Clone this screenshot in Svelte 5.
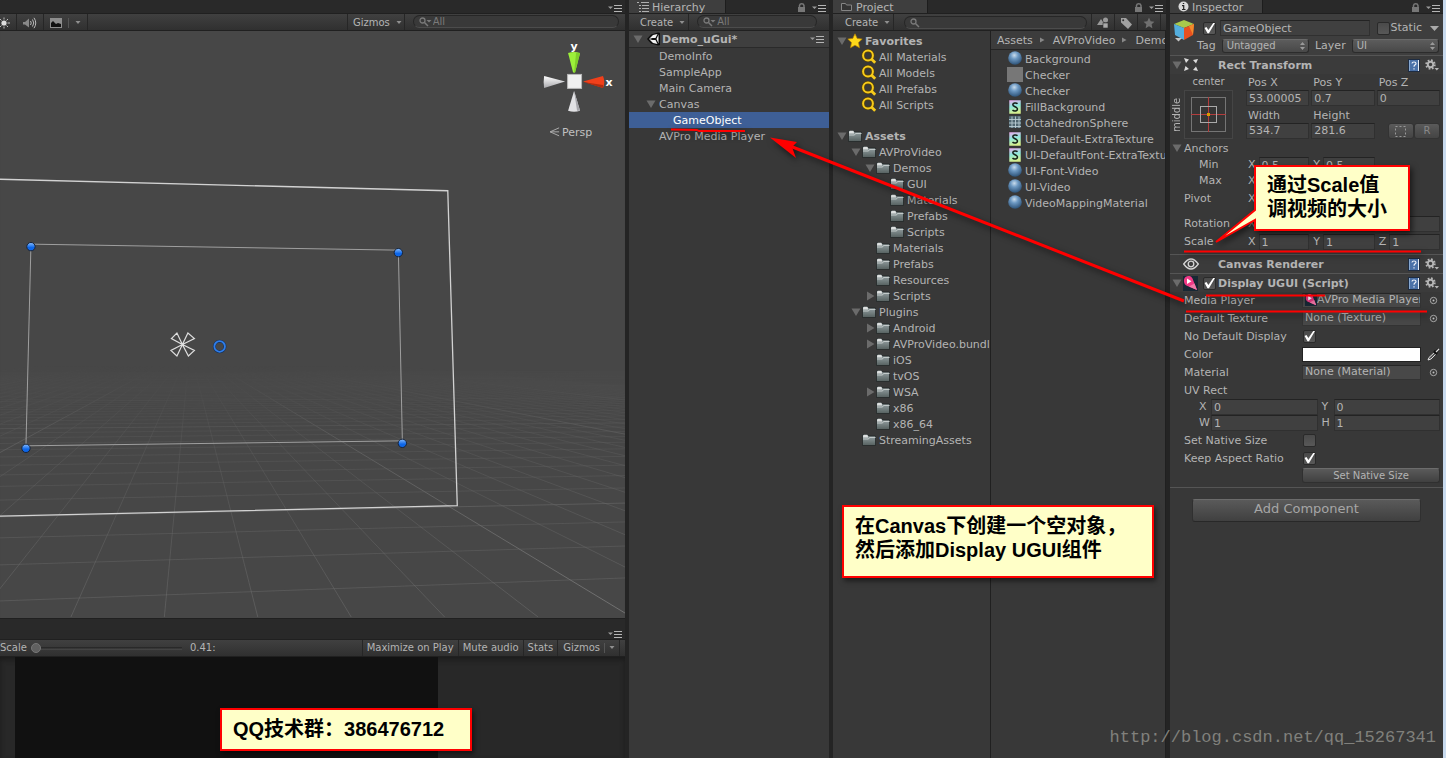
<script lang="ts">
	type Node = { name: string; level: number; arrow?: 'open' | 'closed'; bold?: boolean; icon?: string };

	const hierarchy: Node[] = [
		{ name: 'DemoInfo', level: 0 },
		{ name: 'SampleApp', level: 0 },
		{ name: 'Main Camera', level: 0 },
		{ name: 'Canvas', level: 0, arrow: 'open' },
		{ name: 'GameObject', level: 1 },
		{ name: 'AVPro Media Player', level: 0 }
	];

	const favorites: Node[] = [
		{ name: 'Favorites', level: 0, arrow: 'open', bold: true, icon: 'star' },
		{ name: 'All Materials', level: 1, icon: 'search' },
		{ name: 'All Models', level: 1, icon: 'search' },
		{ name: 'All Prefabs', level: 1, icon: 'search' },
		{ name: 'All Scripts', level: 1, icon: 'search' }
	];

	const folders: Node[] = [
		{ name: 'Assets', level: 0, arrow: 'open', bold: true },
		{ name: 'AVProVideo', level: 1, arrow: 'open' },
		{ name: 'Demos', level: 2, arrow: 'open' },
		{ name: 'GUI', level: 3 },
		{ name: 'Materials', level: 3 },
		{ name: 'Prefabs', level: 3 },
		{ name: 'Scripts', level: 3 },
		{ name: 'Materials', level: 2 },
		{ name: 'Prefabs', level: 2 },
		{ name: 'Resources', level: 2 },
		{ name: 'Scripts', level: 2, arrow: 'closed' },
		{ name: 'Plugins', level: 1, arrow: 'open' },
		{ name: 'Android', level: 2, arrow: 'closed' },
		{ name: 'AVProVideo.bundle', level: 2, arrow: 'closed' },
		{ name: 'iOS', level: 2 },
		{ name: 'tvOS', level: 2 },
		{ name: 'WSA', level: 2, arrow: 'closed' },
		{ name: 'x86', level: 2 },
		{ name: 'x86_64', level: 2 },
		{ name: 'StreamingAssets', level: 1 }
	];

	const files = [
		{ name: 'Background', icon: 'ball' },
		{ name: 'Checker', icon: 'texture' },
		{ name: 'Checker', icon: 'ball' },
		{ name: 'FillBackground', icon: 'shader' },
		{ name: 'OctahedronSphere', icon: 'mesh' },
		{ name: 'UI-Default-ExtraTexture', icon: 'shader' },
		{ name: 'UI-DefaultFont-ExtraTexture', icon: 'shader' },
		{ name: 'UI-Font-Video', icon: 'ball' },
		{ name: 'UI-Video', icon: 'ball' },
		{ name: 'VideoMappingMaterial', icon: 'ball' }
	];

	let selected = $state('GameObject');
	let active = $state(true);
	let isStatic = $state(false);
	let displayEnabled = $state(true);
	let noDefaultDisplay = $state(true);
	let nativeSize = $state(false);
	let keepAspect = $state(true);
	let zoomLevel = $state(0);

	// ground grid: all the depth lines meet at the vanishing point
	const vanish = { x: 190, y: 350 };
	const depthLines = Array.from({ length: 60 }, (_, i) => i - 24).map((k) => ({
		x: 71 + 93.6 * k,
		major: (k + 4) % 10 === 0
	}));
	const crossLines = Array.from({ length: 60 }, (_, n) => ({
		left: vanish.y + 1 / (0.00397 + 0.000665 * n),
		right: vanish.y + 1 / (0.00437 + 0.00071 * n),
		major: (n + 7) % 10 === 0
	}));
	const handles = [[31, 247], [399, 253], [403, 444], [26, 449]];
</script>

{#snippet arrow(kind: string | undefined)}
	<svg class="arrow" width="12" height="12" viewBox="0 0 12 12" aria-hidden="true">
		{#if kind === 'open'}
			<path d="M1.500 2.500h9L6 10z" fill="#6b6b6b" />
		{:else if kind === 'closed'}
			<path d="M3 1.500v9L10.500 6z" fill="#6b6b6b" />
		{/if}
	</svg>
{/snippet}

{#snippet menuIcon()}
	<svg class="menu" width="14" height="8" viewBox="0 0 14 8" aria-hidden="true">
		<path d="M0 2.500h5L2.500 5z" fill="#9a9a9a" />
		<path d="M6 1.500h8M6 4.500h8M6 7.500h8" stroke="#b5b5b5" />
	</svg>
{/snippet}

{#snippet lockIcon()}
	<svg class="lock" width="9" height="11" viewBox="0 0 9 11" aria-hidden="true">
		<path d="M2.500 5V3.500a2.300 2.300 0 0 1 4.500 0V5" fill="none" stroke="#777" stroke-width="1.500" />
		<rect x="1" y="5" width="7" height="5" fill="#777" />
	</svg>
{/snippet}

{#snippet searchIcon(menu: boolean)}
	<svg width="13" height="10" viewBox="0 0 13 10" aria-hidden="true">
		<circle cx="3.500" cy="3.500" r="2.500" fill="none" stroke="#7a7a7a" stroke-width="1.300" />
		<path d="M5.500 5.500L9 9" stroke="#7a7a7a" stroke-width="1.500" />
		{#if menu}<path d="M7.500 3h5L10 5.500z" fill="#7a7a7a" />{/if}
	</svg>
{/snippet}

{#snippet caret()}
	<svg width="6" height="4" viewBox="0 0 6 4" aria-hidden="true"><path d="M.5 0h5L3 3z" fill="#8f8f8f" /></svg>
{/snippet}

{#snippet icon(kind: string)}
	<svg class="icon" width="16" height="16" viewBox="0 0 16 16" aria-hidden="true">
		{#if kind === 'folder'}
			<path d="M1.500 4V2.500h5L7.500 4h7v9.500h-13z" fill="url(#folder)" stroke="#222727" stroke-width=".8" />
			<path d="M2 4.200l.8-1.500h3.400l.8 1.500v1.300H2z" fill="#dde0e0" />
			<path d="M2 7h5.500l1-1.500h6" fill="none" stroke="#c3caca" />
		{:else if kind === 'star'}
			<path d="M8 .8l2.200 4.600 5 .7-3.700 3.500 1 5.200L8 12.200l-4.500 2.600 1-5.200L.8 6.100l5-.7z" fill="#ffd91a" stroke="#b98200" stroke-width=".7" />
		{:else if kind === 'search'}
			<circle cx="7" cy="6.500" r="4.900" fill="none" stroke="#5b4300" stroke-width="3.200" />
			<circle cx="7" cy="6.500" r="4.900" fill="none" stroke="#f6cb1c" stroke-width="2" />
			<path d="M10.200 9.700l4 4" stroke="#f6cb1c" stroke-width="2.800" />
		{:else if kind === 'ball'}
			<circle cx="8" cy="7" r="6.800" fill="url(#ball)" />
		{:else if kind === 'texture'}
			<rect width="16" height="15" fill="#777" />
		{:else if kind === 'shader'}
			<rect x="2" y="1" width="12" height="14" fill="url(#shader)" stroke="#333" stroke-width=".5" />
			<path d="M10.500 4.800C9 3.300 5.800 3.800 5.800 5.800c0 2.200 4.700 1.800 4.700 4.300 0 2.200-3.500 2.400-5 1" fill="none" stroke="#152018" stroke-width="1.500" />
		{:else if kind === 'mesh'}
			<rect x="2" y="1" width="12" height="12" rx="1" fill="#4f656f" />
			<path d="M2 4.500h12M2 8h12M2 11.500h12M5 1.500v11.500M8.500 1.500v11.500M12 1.500v11.500" stroke="#b9ccd2" stroke-width=".9" />
		{/if}
	</svg>
{/snippet}

{#snippet helpIcons()}
	<button class="plain" type="button" aria-label="Help">
		<svg width="12" height="13" viewBox="0 0 12 13" aria-hidden="true">
			<rect x=".5" y=".5" width="11" height="12" fill="#4a71a8" stroke="#1e2c42" />
			<path d="M10.500 1v11" stroke="#e4eaf2" />
			<path d="M1.500 1v11" stroke="#86a7d0" />
			<path d="M4 4.500c0-2 4-2 4 0 0 1.500-2 1.200-2 3.300M6 9.200v1.300" fill="none" stroke="#e8eef8" stroke-width="1.200" />
		</svg>
	</button>
	<button class="plain" type="button" aria-label="Settings">
		<svg width="14" height="12" viewBox="0 0 14 12" aria-hidden="true">
			<circle cx="5.500" cy="5.500" r="4.200" fill="none" stroke="#b4b4b4" stroke-width="2" stroke-dasharray="1.700 1.600" />
			<circle cx="5.500" cy="5.500" r="2.700" fill="none" stroke="#b4b4b4" stroke-width="1.900" />
			<path d="M9.500 9h4.500l-2.200 2.500z" fill="#b4b4b4" />
		</svg>
	</button>
{/snippet}

{#snippet pinkLogo()}
	<svg width="15" height="15" viewBox="0 0 15 15" aria-hidden="true">
		<rect width="15" height="15" fill="#172834" />
		<path d="M1 5a4.500 4.500 0 0 1 8.500-2.500L14 14 4.500 10A5 5 0 0 1 1 5z" fill="#f03a86" />
		<path d="M4 2.500v5.500l4.500-2.800z" fill="#fff" />
		<path d="M14 14L6 10.500l5.500-3z" fill="#f27aa8" />
	</svg>
{/snippet}

{#snippet num(label: string, value: string)}
	<label class="num"><span>{label}</span><input type="text" {value} /></label>
{/snippet}

{#snippet picker(label: string)}
	<button class="plain" type="button" aria-label={label}>
		<svg width="9" height="9" viewBox="0 0 9 9" aria-hidden="true">
			<circle cx="4.500" cy="4.500" r="3.200" fill="none" stroke="#a8a8a8" />
			<circle cx="4.500" cy="4.500" r="1" fill="#c0c0c0" />
		</svg>
	</button>
{/snippet}

{#snippet treeRow(node: Node)}
	<li class="level-{node.level}" class:bold={node.bold}>
		{@render arrow(node.arrow)}
		{@render icon(node.icon ?? 'folder')}
		<span>{node.name}</span>
	</li>
{/snippet}

<svg class="defs" width="0" height="0" aria-hidden="true">
	<defs>
		<linearGradient id="folder" x1="0" y1="0" x2="0" y2="1"><stop offset=".2" stop-color="#8f9b9d" /><stop offset="1" stop-color="#55605f" /></linearGradient>
		<radialGradient id="ball" cx=".45" cy=".3" r=".7"><stop offset="0" stop-color="#c9dcec" /><stop offset=".4" stop-color="#6c98c2" /><stop offset="1" stop-color="#2d5277" /></radialGradient>
		<linearGradient id="shader" x1="0" y1="0" x2=".2" y2="1"><stop offset="0" stop-color="#f3a6ee" /><stop offset=".5" stop-color="#8ee8dd" /><stop offset="1" stop-color="#d8ef8c" /></linearGradient>
		<linearGradient id="cone" x1="0" y1="0" x2="0" y2="1"><stop offset="0" stop-color="#fff" /><stop offset="1" stop-color="#a9a9ad" /></linearGradient>
		<linearGradient id="handle" x1="0" y1="0" x2="0" y2="1"><stop offset="0" stop-color="#8cc0ff" /><stop offset=".6" stop-color="#0d66e8" /></linearGradient>
	</defs>
</svg>

<div class="editor">
	<section class="views">
		<div class="tabs">{@render menuIcon()}</div>
		<div class="toolbar scene-tools">
			<button class="tool sun" type="button" aria-label="Lighting">
				<svg width="10" height="12" viewBox="0 0 10 12"><circle cx="4" cy="6" r="2.600" fill="#ddd" /><path d="M4 .5v2M4 9.500v2M7.500 6H10M6.500 3.500L8 2M6.500 8.500L8 10M1.500 3.500L0 2M1.500 8.500L0 10" stroke="#bbb" /></svg>
			</button>
			<button class="tool" type="button" aria-label="Audio">
				<svg width="14" height="12" viewBox="0 0 14 12"><path d="M0 5h2l4-3.500v9L2 7.500H0z" fill="#888" /><path d="M7.500 4q1.500 2 0 4M9.500 2.500q2.500 3.500 0 7M11 .8q3.500 5.200 0 10.400" fill="none" stroke="#bbb" /></svg>
			</button>
			<button class="tool" type="button" aria-label="Effects">
				<svg width="12" height="10" viewBox="0 0 12 10"><rect width="12" height="10" fill="#8d8d8d" /><path d="M1 5l2-2 3 3 2-1 3 1v3H1z" fill="#111" /></svg>
				<i></i>{@render caret()}
			</button>
			<span class="grow"></span>
			<button class="tool gizmos" type="button">Gizmos {@render caret()}</button>
			<label class="search">{@render searchIcon(true)}<input type="text" placeholder="All" aria-label="Search scene" /></label>
		</div>
		<svg class="scene" viewBox="0 31 626 588" role="img" aria-label="Scene view">
			<defs>
				<linearGradient id="fade" gradientUnits="userSpaceOnUse" x1="0" y1="366" x2="0" y2="619">
					<stop offset="0" stop-color="#000" /><stop offset=".3" stop-color="#777" /><stop offset="1" stop-color="#fff" />
				</linearGradient>
				<mask id="ground" maskUnits="userSpaceOnUse" x="0" y="366" width="626" height="253"><rect x="0" y="366" width="626" height="253" fill="url(#fade)" /></mask>
			</defs>
			<rect y="31" width="626" height="588" fill="#474747" />
			<g mask="url(#ground)" stroke="#777">
				{#each depthLines as line}
					<line x1={vanish.x} y1={vanish.y} x2={line.x} y2="618" stroke-opacity={line.major ? 0.9 : 0.45} />
				{/each}
				{#each crossLines as line}
					<line x1="0" y1={line.left} x2="626" y2={line.right} stroke-opacity={line.major ? 0.65 : 0.4} />
				{/each}
			</g>
			<path d="M0 179.500L448.500 191 458 506.500 0 517" fill="none" stroke="#d2d2d2" stroke-width="1.300" />
			<path d="M31 244.500L399 250.500 403 441.500 26 446.500z" fill="none" stroke="#a0a0a0" />
			{#each handles as [x, y]}
				<circle cx={x} cy={y} r="4.200" fill="url(#handle)" stroke="#172338" />
			{/each}
			<path d="M182.700 345l-11-6 5.500-5.500zM182.700 345l5.500-11.500 6.500 5.500zM182.700 345l12 6-6 5.500zM182.700 345l-5.500 11.500-6-5.500z" fill="none" stroke="#dedede" stroke-width="1.200" />
			<circle cx="220" cy="347" r="5.300" fill="none" stroke="#16305a" stroke-width="3" />
			<circle cx="220" cy="347" r="5.300" fill="none" stroke="#2f7de8" stroke-width="1.800" />
			<path d="M569 53q6-2 12 0l-5 19.500h-2z" fill="#9cf03a" />
			<path d="M577 53h4l-5 19.500h-1z" fill="#7fce2a" />
			<path d="M584 81.500l20-5.500q2.500 6 0 12z" fill="#f0401b" />
			<path d="M584 82l20 3v3z" fill="#b12c10" />
			<path d="M566 81.500L545 76q-1 6 0 12z" fill="url(#cone)" />
			<path d="M575 91l6 20q-6 2-12 0z" fill="#e2e2e5" />
			<path d="M575 91l6 20h-3z" fill="#a5a5aa" />
			<rect x="568.500" y="74.500" width="14" height="14" fill="#f0f0f0" stroke="#b8b8b8" />
			<text x="575" y="50" text-anchor="middle" class="axis">y</text>
			<text x="610" y="86" text-anchor="middle" class="axis">x</text>
			<path d="M560 128l-9 4 9 4M551 132h9" fill="none" stroke="#aaa" />
			<text x="563" y="136" class="persp">Persp</text>
		</svg>
		<div class="tabs game-tabs">{@render menuIcon()}</div>
		<div class="toolbar game-tools">
			<label class="zoom">Scale <input type="range" min="0" max="100" bind:value={zoomLevel} /></label>
			<output>0.41:</output>
			<span class="grow"></span>
			<button class="tool" type="button">Maximize on Play</button>
			<button class="tool" type="button">Mute audio</button>
			<button class="tool" type="button">Stats</button>
			<button class="tool last" type="button">Gizmos <i></i>{@render caret()}</button>
		</div>
		<div class="game"><div class="game-screen"></div></div>
	</section>

	<section class="panel">
		<div class="tabs">
			<h2 class="tab">
				<svg width="12" height="10" viewBox="0 0 12 10" aria-hidden="true"><path d="M0 .5h2M4 .5h8M2 3.500h2M5 3.500h7M2 6.500h2M5 6.500h7M2 9.500h2M5 9.500h7" stroke="#b0b0b0" /></svg>
				<span>Hierarchy</span>
			</h2>
			<span class="grow"></span>{@render lockIcon()}{@render menuIcon()}
		</div>
		<div class="toolbar">
			<button class="tool create" type="button">Create {@render caret()}</button>
			<label class="search">{@render searchIcon(true)}<input type="text" placeholder="All" aria-label="Search hierarchy" /></label>
		</div>
		<div class="scene-row">
			{@render arrow('open')}
			<svg width="14" height="14" viewBox="0 0 14 14" aria-hidden="true">
				<path d="M0 7L4 2.500 11 .5l2 .5v12l-2 .5-7-2z" fill="#0c0c0c" />
				<path d="M2 7l4-4 4.500-1L8.500 6H5.500zM2 7l4 4 4.500 1-2-4H5.500zM11.500 2.500L9.500 7l2 4.500z" fill="#f2f2f2" />
			</svg>
			<strong>Demo_uGui*</strong>
			<span class="grow"></span>{@render menuIcon()}
		</div>
		<ul class="hierarchy">
			{#each hierarchy as node}
				<li class:selected={node.name === selected}>
					<button type="button" class="level-{node.level}" onclick={() => (selected = node.name)}>
						{@render arrow(node.arrow)}<span>{node.name}</span>
					</button>
				</li>
			{/each}
		</ul>
	</section>

	<section class="panel">
		<div class="tabs">
			<h2 class="tab project-tab">
				<svg width="11" height="10" viewBox="0 0 11 10" aria-hidden="true"><path d="M.5 8.500v-7h4l1 1.500h5v5.500z" fill="#333" stroke="#858585" /></svg>
				<span>Project</span>
			</h2>
			<span class="grow"></span>{@render lockIcon()}{@render menuIcon()}
		</div>
		<div class="toolbar project-tools">
			<button class="tool create" type="button">Create {@render caret()}</button>
			<label class="search">{@render searchIcon(false)}<input type="text" aria-label="Search project" /></label>
			<button class="tool" type="button" aria-label="Search by type">
				<svg width="12" height="12" viewBox="0 0 12 12"><path d="M4 2l4 6H0z" fill="#999" /><circle cx="8.500" cy="3" r="2.500" fill="#999" /><rect x="6" y="6" width="5" height="5" fill="#aaa" stroke="#333" stroke-width=".6" /></svg>
			</button>
			<button class="tool" type="button" aria-label="Search by label">
				<svg width="12" height="12" viewBox="0 0 12 12"><path d="M1 1h5l6 6.500L8 12 1 5.500z" fill="#a0a0a0" /><circle cx="3.200" cy="3.200" r="1" fill="#333" /></svg>
			</button>
			<button class="tool last" type="button" aria-label="Save search">
				<svg width="12" height="12" viewBox="0 0 16 16"><path d="M8 .8l2.200 4.900 5 .6-3.700 3.500 1 5.200L8 12.400 3.500 15l1-5.200L.8 6.300l5-.6z" fill="#707070" /></svg>
			</button>
		</div>
		<div class="browser">
			<div class="tree">
				<ul>{#each favorites as node}{@render treeRow(node)}{/each}</ul>
				<ul>{#each folders as node}{@render treeRow(node)}{/each}</ul>
			</div>
			<div class="files">
				<nav>
					<a href="#assets">Assets</a>
					<svg width="5" height="6" viewBox="0 0 5 6" aria-hidden="true"><path d="M0 .5v5L4.500 3z" fill="#888" /></svg>
					<a href="#avprovideo">AVProVideo</a>
					<svg width="5" height="6" viewBox="0 0 5 6" aria-hidden="true"><path d="M0 .5v5L4.500 3z" fill="#888" /></svg>
					<a href="#demos">Demos</a>
				</nav>
				<ul>
					{#each files as file}
						<li>{@render icon(file.icon)}<span>{file.name}</span></li>
					{/each}
				</ul>
			</div>
		</div>
	</section>

	<section class="panel inspector">
		<div class="tabs">
			<h2 class="tab inspector-tab">
				<svg width="11" height="11" viewBox="0 0 11 11" aria-hidden="true"><circle cx="5.500" cy="5.500" r="5" fill="#d8d8d8" /><path d="M4 4.700h1.700v3.800M4 8.500h3.500M4.800 2.500h1.400" fill="none" stroke="#222" stroke-width="1.200" /></svg>
				<span>Inspector</span>
			</h2>
			<span class="grow"></span>{@render lockIcon()}{@render menuIcon()}
		</div>

		<header class="object">
			<svg width="22" height="24" viewBox="0 0 22 24" aria-hidden="true">
				<path d="M1 5l10-4 10 4-10 4z" fill="#a8c94c" />
				<path d="M1 5l10 4v12L2 16z" fill="#54aede" />
				<path d="M21 5L11 9v12l9-5z" fill="#e8501f" />
				<path d="M16 7l5-2-1 11z" fill="#f28a2c" />
				<path d="M2 19h7l-3.500 3.500z" fill="#c5c5c5" />
			</svg>
			<div class="object-fields">
				<div class="object-row">
					<input type="checkbox" aria-label="Active" bind:checked={active} />
					<input class="name" type="text" aria-label="Name" value="GameObject" />
					<label class="static"><input type="checkbox" bind:checked={isStatic} />Static</label>
					<svg width="9" height="5" viewBox="0 0 9 5" aria-hidden="true"><path d="M0 0h9L4.500 5z" fill="#aaa" /></svg>
				</div>
				<div class="object-row">
					<label for="tag">Tag</label>
					<div class="drop">
						<select id="tag"><option>Untagged</option></select>
						<svg width="5" height="8" viewBox="0 0 5 8" aria-hidden="true"><path d="M0 3h5L2.500 0zM0 5h5L2.500 8z" fill="#999" /></svg>
					</div>
					<label for="layer">Layer</label>
					<div class="drop">
						<select id="layer"><option>UI</option></select>
						<svg width="5" height="8" viewBox="0 0 5 8" aria-hidden="true"><path d="M0 3h5L2.500 0zM0 5h5L2.500 8z" fill="#999" /></svg>
					</div>
				</div>
			</div>
		</header>

		<div class="component">
			<h3>
				{@render arrow('open')}
				<svg width="16" height="16" viewBox="0 0 16 16" aria-hidden="true"><path d="M1 1l5 1.500L3 6zM15 2l-5 1 3 3.500zM1 14l1.500-5L6 12zM15 14l-5-1 3-3.500z" fill="#dcdcdc" /></svg>
				<span class="title indent">Rect Transform</span>
				{@render helpIcons()}
			</h3>
			<div class="rect">
				<div class="anchor">
					<span class="center">center</span>
					<span class="middle">middle</span>
					<svg width="49" height="49" viewBox="0 0 49 49" aria-hidden="true">
						<rect x=".5" y=".5" width="48" height="48" fill="#353535" stroke="#454545" />
						<rect x="7.500" y="7.500" width="34" height="34" fill="none" stroke="#757575" />
						<path d="M7 24.500h35M24.500 7v35" stroke="#b33d3d" />
						<rect x="16.500" y="16.500" width="16" height="16" fill="none" stroke="#a9a9a9" />
						<rect x="23" y="23" width="3" height="3" fill="#d99c00" />
					</svg>
				</div>
				<div class="stacked">
					{@render num('Pos X', '53.00005')}
					{@render num('Pos Y', '0.7')}
					{@render num('Pos Z', '0')}
					{@render num('Width', '534.7')}
					{@render num('Height', '281.6')}
					<div class="modes">
						<button type="button" aria-label="Blueprint mode"><svg width="11" height="11" viewBox="0 0 11 11"><rect x=".5" y=".5" width="10" height="10" fill="none" stroke="#999" stroke-dasharray="2 2" /></svg></button>
						<button type="button">R</button>
					</div>
				</div>
			</div>
			<div class="fold">{@render arrow('open')}<span>Anchors</span></div>
			<div class="vector sub"><span>Min</span>{@render num('X', '0.5')}{@render num('Y', '0.5')}</div>
			<div class="vector sub"><span>Max</span>{@render num('X', '0.5')}{@render num('Y', '0.5')}</div>
			<div class="vector pivot"><span>Pivot</span>{@render num('X', '0.5')}{@render num('Y', '0.5')}</div>
			<div class="vector tall rotation"><span>Rotation</span>{@render num('X', '0')}{@render num('Y', '0')}{@render num('Z', '0')}</div>
			<div class="vector tall"><span>Scale</span>{@render num('X', '1')}{@render num('Y', '1')}{@render num('Z', '1')}</div>
		</div>

		<div class="component">
			<h3>
				{@render arrow(undefined)}
				<svg width="16" height="12" viewBox="0 0 16 12" aria-hidden="true"><path d="M.7 6Q8-4 15.300 6 8 16 .7 6z" fill="none" stroke="#d5d5d5" stroke-width="1.300" /><circle cx="8" cy="6" r="2.800" fill="none" stroke="#d5d5d5" stroke-width="1.300" /></svg>
				<span class="title indent">Canvas Renderer</span>
				{@render helpIcons()}
			</h3>
		</div>

		<div class="component">
			<h3>
				{@render arrow('open')}
				{@render pinkLogo()}
				<input type="checkbox" aria-label="Enable Display UGUI" bind:checked={displayEnabled} />
				<span class="title">Display UGUI (Script)</span>
				{@render helpIcons()}
			</h3>
			<div class="props">
				<div class="prop">
					<label for="media">Media Player</label>
					<div class="object-box">{@render pinkLogo()}<input id="media" type="text" value="AVPro Media Player" /></div>
					{@render picker('Pick media player')}
				</div>
				<div class="prop">
					<label for="texture">Default Texture</label>
					<div class="object-box"><input id="texture" type="text" value="None (Texture)" /></div>
					{@render picker('Pick texture')}
				</div>
				<div class="prop"><label for="no-default">No Default Display</label><input id="no-default" type="checkbox" bind:checked={noDefaultDisplay} /></div>
				<div class="prop">
					<label for="color">Color</label>
					<input id="color" type="color" value="#ffffff" />
					<button class="plain" type="button" aria-label="Pick color from screen">
						<svg width="13" height="13" viewBox="0 0 13 13" aria-hidden="true"><path d="M1 12l1-2.500L8 4l1.500 1.500L4 11z" fill="#555" stroke="#ddd" /><path d="M7 3l3 3M9 4l2.500-2.500" stroke="#111" stroke-width="2.500" /><path d="M9 4l3-3" stroke="#ddd" stroke-width="1.200" /></svg>
					</button>
				</div>
				<div class="prop">
					<label for="material">Material</label>
					<div class="object-box"><input id="material" type="text" value="None (Material)" /></div>
					{@render picker('Pick material')}
				</div>
				<div class="prop"><span>UV Rect</span></div>
				<div class="uv">
					{@render num('X', '0')}{@render num('Y', '0')}
					{@render num('W', '1')}{@render num('H', '1')}
				</div>
				<div class="prop"><label for="native">Set Native Size</label><input id="native" type="checkbox" bind:checked={nativeSize} /></div>
				<div class="prop"><label for="aspect">Keep Aspect Ratio</label><input id="aspect" type="checkbox" bind:checked={keepAspect} /></div>
				<button class="bevel set-size" type="button">Set Native Size</button>
			</div>
		</div>
		<button class="bevel add" type="button">Add Component</button>
	</section>

	<!-- annotations drawn over the editor -->
	<svg class="marks" width="1446" height="758" viewBox="0 0 1446 758" aria-hidden="true">
		<g stroke="red" stroke-width="3" fill="none">
			<path d="M1184 301L790 146" />
			<path d="M671 129.500l26 .5 2 1h46M1184 251.500h237M1206 295.500h119M1186 311.500h241" stroke-width="1.800" />
		</g>
		<path d="M770 137.500l27 4.500-5 5 4 11z" fill="red" />
		<path d="M1255 166h154v64h-154v-10l-39 22 39-32z" fill="#ffffc8" stroke="red" stroke-width="2" />
	</svg>
	<p class="note bubble">通过Scale值<br />调视频的大小</p>
	<p class="note boxed create-note">在Canvas下创建一个空对象，<br />然后添加Display UGUI组件</p>
	<p class="note boxed group-note">QQ技术群：386476712</p>
	<p class="watermark">http://blog.csdn.net/qq_15267341</p>
</div>

<style>
	:global(body) {
		background: #292929;
	}

	.editor {
		position: relative;
		display: grid;
		grid-template-columns: 625fr 200fr 333fr 276fr;
		column-gap: 4px;
		min-height: 100vh;
		overflow: hidden;
		background: #242424;
		color: #b4b4b4;
		font: 11px/16px "DejaVu Sans", Verdana, sans-serif;
	}

	.editor :global(svg) {
		flex: none;
	}

	.defs {
		position: absolute;
	}

	ul, h2, h3, p {
		margin: 0;
		padding: 0;
		list-style: none;
		font-size: 11px;
	}

	button, input, select {
		box-sizing: border-box;
		margin: 0;
		font: inherit;
		color: inherit;
	}

	a {
		color: inherit;
		text-decoration: none;
	}

	.views, .panel {
		display: flex;
		flex-direction: column;
		min-width: 0;
	}

	.panel {
		background: #383838;
	}

	.inspector {
		border-right: 3px solid #c9dbef;
	}

	.grow {
		flex: 1;
	}

	/* tab strips and toolbars */
	.tabs {
		display: flex;
		align-items: flex-end;
		justify-content: flex-end;
		gap: 6px;
		height: 14px;
		padding-right: 3px;
		background: #292929;
		border-bottom: 1px solid #202020;
		box-sizing: border-box;
	}

	.tabs .menu {
		margin-bottom: 1px;
	}

	.game-tabs {
		height: 21px;
	}

	.tab {
		display: flex;
		align-items: center;
		gap: 3px;
		height: 13px;
		padding: 0 20px 0 8px;
		background: #3e3e3e;
		border-right: 1px solid #1d1d1d;
		font-weight: normal;
	}

	.project-tab {
		gap: 4px;
		padding-right: 33px;
	}

	.inspector-tab {
		gap: 3px;
		padding-right: 19px;
	}

	.tab span, .hierarchy span, .tree span, .files span, .scene-row strong, .fold span, .title, .prop label, .prop span, nav a {
		padding-top: 2px;
	}

	.toolbar {
		display: flex;
		height: 17px;
		box-sizing: border-box;
		background: linear-gradient(#404040, #303030);
		border-bottom: 1px solid #202020;
		font-size: 10px;
	}

	.tool {
		display: flex;
		align-items: center;
		gap: 6px;
		padding: 1px 5px 0;
		background: none;
		border: 0;
		border-right: 1px solid #262626;
		white-space: nowrap;
	}

	.tool i {
		width: 1px;
		height: 10px;
		background: #555;
	}

	.scene-tools .tool {
		padding-right: 6px;
		padding-left: 6px;
	}

	.scene-tools .sun {
		padding-left: 0;
	}

	.scene-tools .gizmos {
		padding: 1px 2px 0 5px;
		border-left: 1px solid #262626;
	}

	.create {
		padding-left: 11px;
		padding-right: 3px;
	}

	.project-tools .create {
		padding-left: 12px;
	}

	.search {
		display: flex;
		align-items: center;
		gap: 1px;
		flex: 1;
		min-width: 0;
		height: 13px;
		margin: 1px 12px 0 8px;
		padding-left: 5px;
		box-sizing: border-box;
		background: #393939;
		border: 1px solid #262626;
		border-bottom-color: #4c4c4c;
		border-radius: 7px;
	}

	.scene-tools .search {
		flex: 0 0 33%;
		margin-right: 6px;
	}

	.search input {
		flex: 1;
		min-width: 0;
		height: 11px;
		padding: 0;
		background: none;
		border: 0;
		outline: 0;
	}

	.search input::placeholder {
		color: #7a7a7a;
	}

	.project-tools .search {
		margin: 2px 4px 0 10px;
	}

	.project-tools .search + .tool {
		border-left: 1px solid #262626;
	}

	.project-tools .last {
		margin-right: 5px;
	}

	/* scene and game views */
	.scene {
		display: block;
		width: 100%;
		border-bottom: 1px solid #202020;
	}

	.axis {
		fill: #fff;
		font: bold 11px "DejaVu Sans", sans-serif;
	}

	.persp {
		fill: #c0c0c0;
		font: 11px "DejaVu Sans", sans-serif;
	}

	.zoom {
		display: flex;
		align-items: center;
		gap: 4px;
	}

	.zoom input {
		width: 151px;
		height: 12px;
		appearance: none;
		background: linear-gradient(#222, #4b4b4b) center / 100% 3px no-repeat;
	}

	.zoom input::-webkit-slider-thumb {
		appearance: none;
		width: 10px;
		height: 10px;
		border-radius: 50%;
		background: #606060;
		border: 1px solid #777;
	}

	.game-tools output {
		margin-left: 8px;
	}

	.game-tools .tool {
		padding: 0 4px;
	}

	.game-tools .grow {
		border-right: 1px solid #262626;
	}

	.game-tools .last {
		gap: 4px;
		padding-left: 5px;
		margin-right: 5px;
	}

	.game {
		display: flex;
		flex: 1;
		padding: 0 30% 0 15px;
		background: #282828;
		box-shadow: inset 0 3px 5px #1c1c1c;
	}

	.game-screen {
		flex: 1;
		background: #111;
	}

	/* hierarchy */
	.scene-row {
		display: flex;
		align-items: center;
		gap: 3px;
		height: 17px;
		padding: 0 5px 0 3px;
		box-sizing: border-box;
		background: #3f3f3f;
		border-bottom: 1px solid #2a2a2a;
	}

	.scene-row svg + strong {
		margin-left: -2px;
	}

	.hierarchy button {
		display: flex;
		align-items: center;
		width: 100%;
		height: 16px;
		gap: 2px;
		padding: 0 0 0 16px;
		background: none;
		border: 0;
		white-space: nowrap;
	}

	.hierarchy .level-1 {
		padding-left: 30px;
	}

	.hierarchy .selected {
		background: #3e5f96;
		color: #fff;
	}

	/* project browser */
	.browser {
		display: grid;
		grid-template-columns: 157fr 174fr;
		column-gap: 1px;
		flex: 1;
		padding-right: 1px;
		background: #202020;
	}

	.tree, .files {
		min-width: 0;
		overflow: hidden;
		background: #383838;
	}

	.tree {
		padding-top: 2px;
	}

	.tree ul {
		margin-bottom: 15px;
	}

	.tree li, .files li {
		display: flex;
		align-items: center;
		gap: 2px;
		height: 16px;
		white-space: nowrap;
	}

	.tree li {
		padding-left: 3px;
	}

	.tree .arrow {
		margin-right: -3px;
	}

	.tree .level-1 {
		padding-left: 17px;
	}

	.tree .level-2 {
		padding-left: 31px;
	}

	.tree .level-3 {
		padding-left: 45px;
	}

	.bold {
		font-weight: bold;
	}

	nav {
		display: flex;
		align-items: center;
		gap: 7px;
		height: 18px;
		padding-left: 6px;
		background: #3c3c3c;
		border-bottom: 1px solid #242424;
		white-space: nowrap;
	}

	nav svg + a {
		margin-left: 1px;
	}

	.files li {
		padding-left: 16px;
	}

	.files ul {
		padding-top: 1px;
	}

	/* inspector */
	.object {
		display: flex;
		gap: 2px;
		height: 41px;
		padding: 5px 4px 0 3px;
		box-sizing: border-box;
		background: #3e3e3e;
	}

	.object-fields {
		flex: 1;
		min-width: 0;
	}

	.object-row {
		display: flex;
		align-items: center;
		gap: 6px;
		height: 18px;
	}

	.object-row:first-child {
		padding-left: 6px;
		gap: 4px;
	}

	.static {
		display: flex;
		gap: 1px;
		align-items: center;
		margin: 0 4px 0 3px;
	}

	input[type='text'] {
		min-width: 0;
	}

	.name, .num input {
		height: 16px;
		padding: 1px 2px 0;
		background: #404040;
		border: 1px solid #303030;
		border-top-color: #232323;
	}

	.name {
		flex: 1;
	}

	.drop {
		position: relative;
		flex: 1;
		height: 14px;
	}

	.drop select {
		display: block;
		width: 100%;
		height: 14px;
		padding: 0 4px;
		appearance: none;
		background: linear-gradient(#5c5c5c, #484848);
		border: 1px solid #2c2c2c;
		border-top-color: #6a6a6a;
		border-radius: 3px;
		font-size: 10px;
		line-height: 12px;
	}

	.drop svg {
		position: absolute;
		right: 4px;
		top: 3px;
	}

	input[type='checkbox'] {
		flex: none;
		width: 13px;
		height: 13px;
		appearance: none;
		background: linear-gradient(#4a4a4a, #585858);
		border: 1px solid #2a2a2a;
		border-radius: 2px;
	}

	input[type='checkbox']:checked::after {
		content: '';
		display: block;
		width: 11px;
		height: 11px;
		background: #fff;
		clip-path: polygon(5% 50%, 22% 42%, 40% 68%, 84% 5%, 100% 5%, 45% 98%, 32% 98%);
	}

	.component {
		border-top: 1px solid #555;
	}

	h3 {
		display: flex;
		align-items: center;
		height: 18px;
		padding: 0 4px 0 1px;
		background: #3b3b3b;
	}

	h3 input[type='checkbox'] {
		margin-left: 5px;
	}

	.title {
		flex: 1;
		padding-left: 2px;
	}

	.title.indent {
		padding-left: 19px;
	}

	.plain {
		display: flex;
		padding: 0;
		margin-left: 5px;
		background: none;
		border: 0;
	}

	.rect {
		display: flex;
	}

	.anchor {
		display: grid;
		grid-template: 16px 49px / 14px 49px;
		width: 76px;
	}

	.anchor .center {
		grid-column: 2;
		font-size: 10px;
		text-align: center;
	}

	.anchor .middle {
		font-size: 10px;
		line-height: 14px;
		text-align: center;
		writing-mode: vertical-rl;
		rotate: 180deg;
	}

	.num {
		display: flex;
		align-items: center;
		gap: 2px;
		min-width: 0;
	}

	.num input {
		flex: 1;
		width: 0;
	}

	.stacked {
		display: grid;
		grid-template-columns: repeat(3, 1fr);
		column-gap: 2px;
		flex: 1;
		padding-right: 3px;
	}

	.stacked .num {
		flex-direction: column;
		align-items: stretch;
		gap: 0;
	}

	.stacked .num span {
		height: 16px;
		padding-left: 2px;
		line-height: 18px;
	}

	.stacked .num input {
		flex: none;
		width: 100%;
	}

	.modes {
		display: flex;
		align-self: end;
		padding-left: 11px;
	}

	.modes button {
		display: flex;
		align-items: center;
		justify-content: center;
		flex: 1;
		height: 16px;
		padding: 0;
		background: linear-gradient(#5a5a5a, #444);
		border: 1px solid #333;
		border-radius: 3px;
		color: #888;
		font-size: 10px;
	}

	.fold {
		display: flex;
		align-items: center;
		gap: 1px;
		height: 18px;
		padding-left: 1px;
	}

	.vector {
		display: grid;
		grid-template-columns: 60px repeat(3, 1fr);
		column-gap: 2px;
		align-items: center;
		height: 16px;
		padding: 0 3px 0 14px;
	}

	.vector .num {
		padding-left: 2px;
		gap: 3px;
	}

	.vector.sub > span {
		padding-left: 15px;
	}

	.pivot {
		padding-top: 2px;
	}

	.vector.tall {
		height: 18px;
	}

	.vector.rotation {
		padding-top: 8px;
	}

	.vector.tall:last-child {
		padding-bottom: 3px;
	}

	.props {
		margin-top: -1px;
	}

	.prop {
		display: grid;
		grid-template-columns: 118px 1fr 19px;
		align-items: center;
		height: 18px;
		padding: 0 3px 0 14px;
		white-space: nowrap;
	}

	.object-box {
		display: flex;
		align-items: center;
		height: 15px;
		padding-left: 2px;
		box-sizing: border-box;
		overflow: hidden;
		background: #484848;
		border: 1px solid #333;
		border-top-color: #262626;
	}

	.object-box :global(svg) {
		width: 12px;
		height: 12px;
	}

	.object-box input {
		flex: 1;
		padding: 0;
		background: none;
		border: 0;
	}

	.prop input[type='checkbox'] {
		margin-left: 1px;
	}

	input[type='color'] {
		width: 100%;
		height: 15px;
		padding: 0;
		appearance: none;
		background: #fff;
		border: 1px solid #222;
	}

	input[type='color']::-webkit-color-swatch-wrapper {
		padding: 0;
	}

	input[type='color']::-webkit-color-swatch {
		border: 0;
	}

	.prop .plain {
		justify-content: center;
	}

	.uv {
		display: grid;
		grid-template-columns: 1fr 1fr;
		column-gap: 4px;
		padding: 0 3px 0 29px;
	}

	.uv span {
		width: 10px;
	}

	.bevel {
		display: block;
		background: linear-gradient(#5a5a5a, #404040);
		border: 1px solid #303030;
		border-top-color: #6c6c6c;
		border-radius: 3px;
	}

	.set-size {
		width: 138px;
		height: 15px;
		margin: 1px 3px 4px auto;
		padding: 0;
		font-size: 10px;
		line-height: 12px;
	}

	.inspector > .add {
		height: 23px;
		margin: 11px 22px 0;
		padding: 0 0 4px;
		border-bottom-color: #282828;
		color: #a6a6a6;
		font-size: 13px;
	}

	.component:nth-last-child(2) {
		border-bottom: 1px solid #555;
	}

	/* annotations */
	.marks {
		position: absolute;
		top: 0;
		left: 0;
		filter: drop-shadow(2px 3px 3px rgba(0, 0, 0, 0.6));
		pointer-events: none;
	}

	.note {
		position: absolute;
		color: #000;
		font: bold 20px/24px "Liberation Sans", Arial, "Noto Sans CJK SC", sans-serif;
		white-space: nowrap;
	}

	.boxed {
		box-sizing: border-box;
		padding: 7px 11px;
		background: #ffffc8;
		border: 2px solid red;
		box-shadow: 2px 3px 5px rgba(0, 0, 0, 0.5);
	}

	.bubble {
		top: 173px;
		left: 1267px;
	}

	.create-note {
		top: 505px;
		left: 842px;
		width: 312px;
		height: 73px;
	}

	.group-note {
		top: 708px;
		left: 220px;
		width: 252px;
		height: 43px;
	}

	.watermark {
		position: absolute;
		right: 10px;
		bottom: 10px;
		color: #80807c;
		font: 17px/20px "Liberation Mono", "Courier New", monospace;
	}
</style>
